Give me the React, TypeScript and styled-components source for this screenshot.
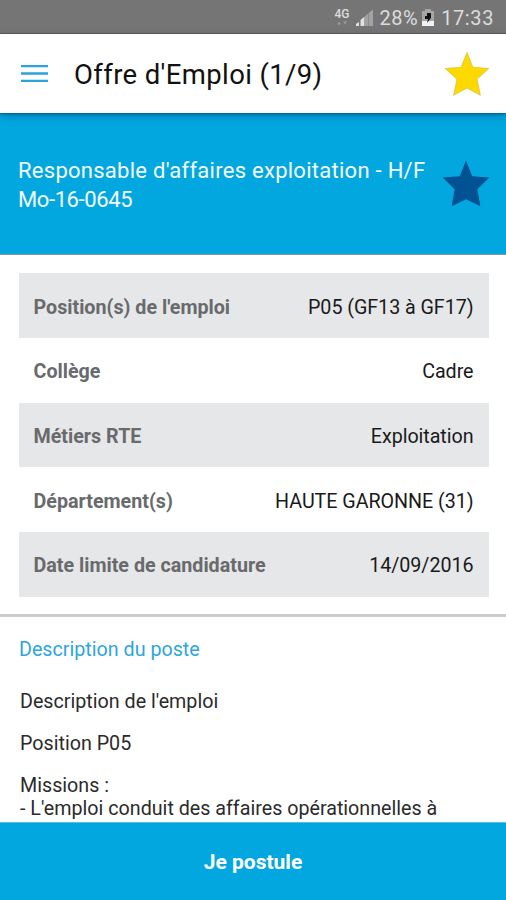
import React from "react";
import styled, { createGlobalStyle } from "styled-components";

const GlobalStyle = createGlobalStyle`
  * { box-sizing: border-box; }
  body { margin: 0; background: #fff; }
  p, h1, h2 { margin: 0; font-weight: 400; }
`;

const Screen = styled.div`
  width: 506px;
  height: 900px;
  display: flex;
  flex-direction: column;
  overflow: hidden;
  background: #fff;
  font-family: Roboto, "Liberation Sans", sans-serif;
`;

const StatusBar = styled.div`
  flex: none;
  height: 34px;
  display: flex;
  justify-content: flex-end;
  align-items: center;
  padding: 2px 12px 0 0;
  background: #757575;
  border-bottom: 1px solid #5c5c5c;
  color: #dcdcdc;
`;

const StatusText = styled.span<{ $track: number }>`
  font-size: 20px;
  line-height: 24px;
  letter-spacing: ${(p) => p.$track}px;
`;

const Network = styled.div`
  width: 16px;
  height: 17px;
  margin-right: 5px;
  font-size: 12px;
  line-height: 11px;
  font-weight: 500;
`;

const NetworkArrows = styled.svg`
  display: block;
`;

const Signal = styled.svg`
  margin-right: 7px;
`;

const Battery = styled.svg`
  margin: 0 7px 0 4px;
`;

const AppBar = styled.header`
  flex: none;
  height: 79px;
  display: flex;
  align-items: center;
  padding: 0 16px 0 21px;
  background: #fff;
  z-index: 1;
  box-shadow: 0 1px 2px rgba(0, 50, 80, 0.5), 0 3px 8px rgba(0, 50, 80, 0.35);
`;

const MenuIcon = styled.svg`
  flex: none;
  margin-right: 26px;
`;

const Title = styled.h1`
  flex: 1;
  font-size: 27.5px;
  line-height: 34px;
  letter-spacing: 0.37px;
  padding-top: 3px;
  white-space: nowrap;
  color: #111;
`;

const Hero = styled.section`
  flex: none;
  height: 142px;
  display: flex;
  align-items: flex-start;
  justify-content: space-between;
  padding: 43px 16px 0 18px;
  background: #02a7e0;
  border-bottom: 1px solid #7f9aa0;
`;

const HeroText = styled.div`
  font-size: 22px;
  line-height: 29px;
  white-space: nowrap;
  color: #f4fbff;
`;

const HeroLine = styled.p<{ $track: number }>`
  letter-spacing: ${(p) => p.$track}px;
`;

const HeroStar = styled.svg`
  flex: none;
  margin-top: 4px;
`;

const Details = styled.dl`
  flex: none;
  display: grid;
  grid-auto-rows: 64.7px;
  margin: 0;
  padding: 18.3px 17.5px 17px 18.5px;
  border-bottom: 3px solid #cbcbcb;
`;

const Row = styled.div<{ $shaded: boolean }>`
  display: flex;
  align-items: center;
  justify-content: space-between;
  padding: 3px 15px 0;
  background: ${(p) => (p.$shaded ? "#e6e7e9" : "#fff")};
  font-size: 19.7px;
  white-space: nowrap;
`;

const Label = styled.dt`
  font-weight: 700;
  color: #696a6c;
`;

const Value = styled.dd`
  margin: 0;
  color: #1a1a1a;
  letter-spacing: -0.05px;
`;

const Description = styled.section`
  flex: 1;
  min-height: 0;
  overflow: hidden;
  padding: 21px 20px 0;
  color: #2b2b2b;
`;

const SectionTitle = styled.h2`
  margin: 0 0 28px -1px;
  font-size: 19.7px;
  line-height: 24px;
  color: #2ea6dc;
`;

const Paragraph = styled.p`
  font-size: 19.7px;
  line-height: 23px;
  margin-bottom: 19px;
  white-space: nowrap;
`;

const Apply = styled.button`
  flex: none;
  height: 78px;
  border: 0;
  border-top: 1px solid #58bfe2;
  padding: 1px 0 0;
  background: #02a7e0;
  color: #fff;
  font: 700 21px Roboto, "Liberation Sans", sans-serif;
`;

const rows = [
  { label: "Position(s) de l'emploi", value: "P05 (GF13 à GF17)" },
  { label: "Collège", value: "Cadre" },
  { label: "Métiers RTE", value: "Exploitation" },
  { label: "Département(s)", value: "HAUTE GARONNE (31)" },
  { label: "Date limite de candidature", value: "14/09/2016" },
];

export default function App() {
  return (
    <>
      <GlobalStyle />
      <Screen>
        <StatusBar>
          <Network>
            4G
            <NetworkArrows width="13" height="6" viewBox="0 0 13 6">
              <path d="M2 4.5 4 1.5 6 4.500ZM8 1.5h4L10 4.5Z" fill="#9d9d9d" />
            </NetworkArrows>
          </Network>
          <Signal width="17" height="18" viewBox="0 0 17 18">
            <path d="M0 17v-2l3-2v4ZM4.500 17v-6L8 8v9Z" fill="#e2e2e2" />
            <path d="M8 17V8l4-3.500V17ZM12.500 17V4L17 .5V17Z" fill="#a2a2a2" />
          </Signal>
          <StatusText $track={0.5}>28%</StatusText>
          <Battery width="12" height="17" viewBox="0 0 12 17">
            <path d="M3 0h6v2h3v15H0V2h3Z" fill="#a6a6a6" />
            <path d="M0 12h12v5H0Z" fill="#f2f2f2" />
            <path d="M5 4h4v5L5 14l1-4H3V7h2Z" fill="#111" />
          </Battery>
          <StatusText $track={0.6}>17:33</StatusText>
        </StatusBar>
        <AppBar>
          <MenuIcon width="27" height="19" viewBox="0 0 27 19">
            <path d="M0 2.2h27M0 9.5h27M0 16.8h27" stroke="#2ba3dc" strokeWidth="2.3" />
          </MenuIcon>
          <Title>Offre d'Emploi (1/9)</Title>
          <svg width="46" height="46" viewBox="0 0 46 46">
            <path
              d="M23 1.5 28.8 16.2 44.7 17.5 33 28.2 36.4 44.3 23 37 9.6 44.3 13 28.2 1.3 17.5 17.2 16.2Z"
              fill="#fdd900"
              stroke="#d8bc2c"
              strokeWidth=".7"
            />
          </svg>
        </AppBar>
        <Hero>
          <HeroText>
            <HeroLine $track={0.27}>Responsable d'affaires exploitation - H/F</HeroLine>
            <HeroLine $track={-0.4}>Mo-16-0645</HeroLine>
          </HeroText>
          <HeroStar width="48" height="48" viewBox="0 0 48 48">
            <path
              d="M24 .5 30.2 16.3 47.3 17.5 35.4 29.2 38.3 46.3 24 39.3 9.7 46.3 12.6 29.2 .7 17.5 17.8 16.3Z"
              fill="#005293"
            />
          </HeroStar>
        </Hero>
        <Details>
          {rows.map((r, i) => (
            <Row key={r.label} $shaded={i % 2 === 0}>
              <Label>{r.label}</Label>
              <Value>{r.value}</Value>
            </Row>
          ))}
        </Details>
        <Description>
          <SectionTitle>Description du poste</SectionTitle>
          <Paragraph>Description de l'emploi</Paragraph>
          <Paragraph>Position P05</Paragraph>
          <Paragraph>
            Missions :<br />- L'emploi conduit des affaires opérationnelles à
          </Paragraph>
        </Description>
        <Apply>Je postule</Apply>
      </Screen>
    </>
  );
}
